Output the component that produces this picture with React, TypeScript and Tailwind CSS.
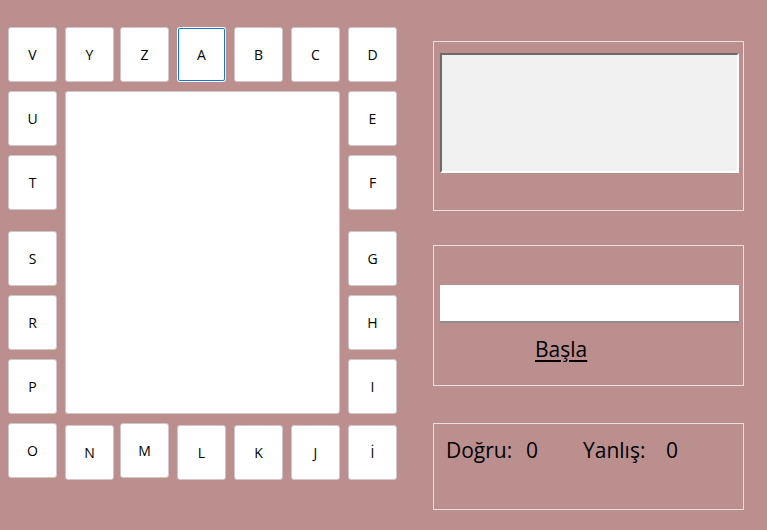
const font = { fontFamily: '"Open Sans", "Noto Sans", sans-serif' }

type KeyProps = {
  letter: string
  className?: string
}

const Key = ({ letter, className = 'border-[#cfc7c7]' }: KeyProps) => (
  <div
    className={`w-[49px] h-[55px] bg-white rounded-[3px] border flex items-center justify-center text-[14px] text-black ${className}`}
  >
    {letter}
  </div>
)

function App() {
  return (
    <div className="w-[767px] h-[530px] bg-[#bc8f8f] flex overflow-hidden" style={font}>
      {/* letter board */}
      <div className="pl-[8px] pt-[27px]">
        <div className="grid grid-cols-[57px_55px_57px_57px_57px_57px_49px] grid-rows-[64px_64px_76px_64px_64px_64px_57px]">
          <Key letter="V" className="border-[#cfc7c7] col-start-1 row-start-1" />
          <Key letter="Y" className="border-[#cfc7c7] col-start-2 row-start-1" />
          <Key letter="Z" className="border-[#cfc7c7] col-start-3 row-start-1" />
          <Key letter="A" className="border-transparent ring-1 ring-inset ring-[#1677d2] col-start-4 row-start-1" />
          <Key letter="B" className="border-[#cfc7c7] col-start-5 row-start-1" />
          <Key letter="C" className="border-[#cfc7c7] col-start-6 row-start-1" />
          <Key letter="D" className="border-[#cfc7c7] col-start-7 row-start-1" />

          <Key letter="U" className="border-[#cfc7c7] col-start-1 row-start-2" />
          <Key letter="T" className="border-[#cfc7c7] col-start-1 row-start-3" />
          <Key letter="S" className="border-[#cfc7c7] col-start-1 row-start-4" />
          <Key letter="R" className="border-[#cfc7c7] col-start-1 row-start-5" />
          <Key letter="P" className="border-[#cfc7c7] col-start-1 row-start-6" />
          <Key letter="O" className="border-[#cfc7c7] col-start-1 row-start-7" />

          <div className="col-start-2 col-span-5 row-start-2 row-span-5 w-[275px] h-[323px] bg-white rounded-[3px] border border-[#cfc7c7]" />

          <Key letter="E" className="border-[#cfc7c7] col-start-7 row-start-2" />
          <Key letter="F" className="border-[#cfc7c7] col-start-7 row-start-3" />
          <Key letter="G" className="border-[#cfc7c7] col-start-7 row-start-4" />
          <Key letter="H" className="border-[#cfc7c7] col-start-7 row-start-5" />
          <Key letter="I" className="border-[#cfc7c7] col-start-7 row-start-6" />
          <Key letter="İ" className="border-[#cfc7c7] col-start-7 row-start-7 mt-[2px]" />

          <Key letter="N" className="border-[#cfc7c7] col-start-2 row-start-7 mt-[2px]" />
          <Key letter="M" className="border-[#cfc7c7] col-start-3 row-start-7" />
          <Key letter="L" className="border-[#cfc7c7] col-start-4 row-start-7 mt-[2px]" />
          <Key letter="K" className="border-[#cfc7c7] col-start-5 row-start-7 mt-[2px]" />
          <Key letter="J" className="border-[#cfc7c7] col-start-6 row-start-7 mt-[2px]" />
        </div>
      </div>

      {/* right side */}
      <div className="ml-[36px] pt-[41px] w-[311px] flex flex-col">
        <div className="h-[170px] border border-[#ecdcdc] pl-[6px] pt-[11px]">
          <div className="w-[299px] h-[120px] bg-[#f0f0f0] border-2 border-t-[#6b6b6b] border-l-[#6b6b6b] border-r-white border-b-white" />
        </div>

        <div className="h-[141px] mt-[34px] border border-[#ecdcdc] pl-[6px] pt-[39px]">
          <div className="w-[299px] h-[38px] bg-white border-b-2 border-b-[#8c8c8c]" />
          <div className="pl-[95px] pt-[16px] text-[21px] leading-none text-black">
            <span className="underline underline-offset-[3px]">Başla</span>
          </div>
        </div>

        <div className="h-[87px] mt-[37px] border border-[#ecdcdc] pl-[12px] pt-[16px] text-[21px] leading-none text-black flex items-start">
          <span className="w-[80px]">Doğru:</span>
          <span className="w-[57px]">0</span>
          <span className="w-[83px]">Yanlış:</span>
          <span>0</span>
        </div>
      </div>
    </div>
  )
}

export default App
